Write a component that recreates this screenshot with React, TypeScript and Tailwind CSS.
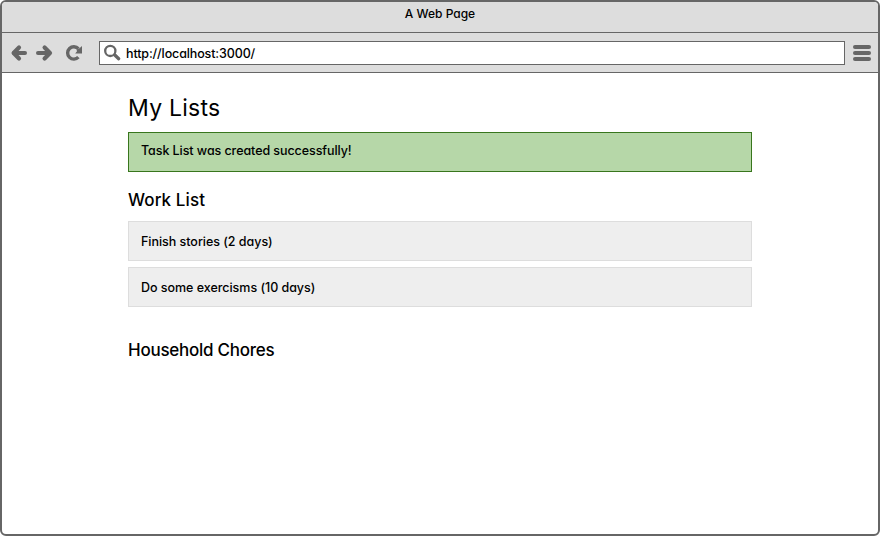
import type { ReactNode } from 'react';

function BackIcon() {
  return (
    <svg width="18" height="18" viewBox="0 0 18 18" fill="none" stroke="#666" strokeLinecap="round" strokeLinejoin="round">
      <path d="M4 9H15" strokeWidth="4" />
      <path d="M9 3.6L3.6 9L9 14.4" strokeWidth="4.2" />
    </svg>
  );
}

function ForwardIcon() {
  return (
    <svg width="18" height="18" viewBox="0 0 18 18" fill="none" stroke="#666" strokeLinecap="round" strokeLinejoin="round">
      <path d="M3 9H14" strokeWidth="4" />
      <path d="M9.6 3.6L15 9L9.6 14.4" strokeWidth="4.2" />
    </svg>
  );
}

function ReloadIcon() {
  return (
    <svg width="18" height="18" viewBox="0 0 18 18">
      <path d="M13.4 4.7A6.2 6.2 0 1 0 13.4 13.1" fill="none" stroke="#666" strokeWidth="3.4" />
      <path d="M17 2V9.5H10.2L12 7.2L11.5 5.5L14.5 4.2Z" fill="#666" />
    </svg>
  );
}

function SearchIcon() {
  return (
    <svg width="18" height="18" viewBox="0 0 18 18" fill="none" stroke="#666" strokeLinecap="round">
      <circle cx="6.3" cy="6.9" r="5.1" strokeWidth="2.3" />
      <path d="M10.8 11L14.7 14.7" strokeWidth="3.3" />
    </svg>
  );
}

function Task({ children }: { children: ReactNode }) {
  return (
    <li className="h-10 border border-[#ddd] bg-[#eee] pl-3 text-[12.5px] leading-[39px] tracking-[-0.03px]">
      {children}
    </li>
  );
}

export default function App() {
  return (
    <div className="h-[536px] w-[880px] bg-white font-['Inter',sans-serif] font-medium text-black [font-feature-settings:'cv11']">
      <div className="flex h-full flex-col overflow-hidden rounded-md border-2 border-[#666] bg-white">
        <header className="h-[31px] shrink-0 border-b border-[#666] bg-[#ddd] text-center text-[12px] leading-[23px]">
          A Web Page
        </header>
        <nav className="flex h-10 shrink-0 items-center border-b border-[#666] bg-[#ddd] pl-2">
          <BackIcon />
          <span className="ml-[7px]"><ForwardIcon /></span>
          <span className="ml-3"><ReloadIcon /></span>
          <div className="ml-4 flex h-6 w-[746px] items-center border border-[#666] bg-white pl-1">
            <SearchIcon />
            <span className="ml-1 pt-0.5 text-[12.5px] leading-[22px] tracking-[-0.12px]">http://localhost:3000/</span>
          </div>
          <div className="ml-2 flex flex-col gap-0.5">
            <i className="h-1 w-[18px] rounded-sm bg-[#666]" />
            <i className="h-1 w-[18px] rounded-sm bg-[#666]" />
            <i className="h-1 w-[18px] rounded-sm bg-[#666]" />
          </div>
        </nav>
        <main className="ml-[126px] w-[624px]">
          <h1 className="mt-5 h-[39px] text-[23px] leading-[31px] font-normal tracking-[0.25px]">My Lists</h1>
          <div className="h-10 border border-[#38761d] bg-[#b6d7a8] pl-3 text-[12.5px] leading-[35px] tracking-[-0.07px]">Task List was created successfully!</div>
          <h2 className="mt-4 h-[33px] text-[17px] leading-[25px] tracking-[0.1px]">Work List</h2>
          <ul className="flex flex-col gap-1.5">
            <Task>Finish stories (2 days)</Task>
            <Task>Do some exercisms (10 days)</Task>
          </ul>
          <h2 className="mt-[31px] text-[17px] leading-[25px] tracking-[-0.25px]">Household Chores</h2>
        </main>
      </div>
    </div>
  );
}
